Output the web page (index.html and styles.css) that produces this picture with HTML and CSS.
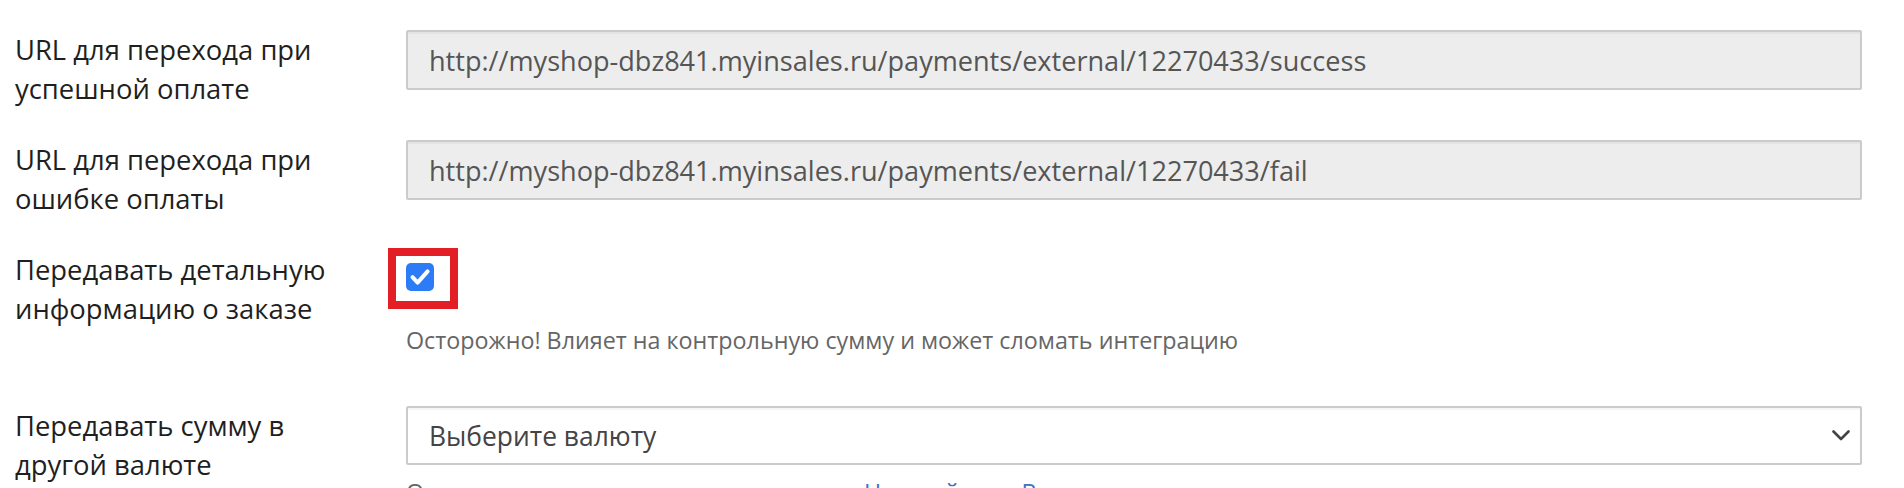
FILE: index.html
```html
<!DOCTYPE html>
<html lang="ru">
<head>
<meta charset="utf-8">
<title>Настройки оплаты</title>
<link rel="stylesheet" href="styles.css">
</head>
<body>
<div class="form">
  <div class="row">
    <div class="label">URL для перехода при успешной оплате</div>
    <div class="field">
      <input class="input" type="text" readonly value="http://myshop-dbz841.myinsales.ru/payments/external/12270433/success">
    </div>
  </div>
  <div class="row">
    <div class="label">URL для перехода при ошибке оплаты</div>
    <div class="field">
      <input class="input" type="text" readonly value="http://myshop-dbz841.myinsales.ru/payments/external/12270433/fail">
    </div>
  </div>
  <div class="row">
    <div class="label">Передавать детальную информацию о заказе</div>
    <div class="field field-check">
      <div class="checkbox">
        <svg class="check" width="28" height="28" viewBox="0 0 28 28"><path d="M6.5 14.2 L11.6 19.6 L21.6 8.4" fill="none" stroke="#fff" stroke-width="4" stroke-linecap="round" stroke-linejoin="round"/></svg>
        <span class="annot"></span>
      </div>
      <div class="help">Осторожно! Влияет на контрольную сумму и может сломать интеграцию</div>
    </div>
  </div>
  <div class="row">
    <div class="label">Передавать сумму в другой валюте</div>
    <div class="field">
      <div class="select">
        <span class="select-text">Выберите валюту</span>
        <svg class="chevron" width="18" height="11" viewBox="0 0 18 11"><path d="M1.5 1.5 L9 9 L16.5 1.5" fill="none" stroke="#444" stroke-width="2.6" stroke-linecap="round" stroke-linejoin="round"/></svg>
      </div>
      <div class="help help-bottom">Основная валюта задается на странице <a class="link" href="#">Настройки → Валюты</a></div>
    </div>
  </div>
</div>
</body>
</html>
```
FILE: styles.css
```css
html, body {
  margin: 0;
  background: #ffffff;
}

body {
  font-family: "Open Sans", "Noto Sans", sans-serif;
  color: #222222;
  overflow: hidden;
}

.form {
  display: flex;
  flex-direction: column;
  gap: 32px;
  padding: 30px 42px 0 15px;
}

.row {
  display: grid;
  grid-template-columns: 391px 1fr;
  align-items: start;
}

.label {
  font-size: 27.4px;
  line-height: 39px;
  color: #1f1f1f;
  max-width: 330px;
}

.field {
  min-width: 0;
}

.input {
  display: block;
  box-sizing: border-box;
  width: 100%;
  height: 60px;
  margin: 0;
  padding: 0 21px;
  border: 2px solid #cbcbcb;
  border-radius: 2px;
  background: #ededed;
  box-shadow: inset 0 2px 1px rgba(0, 0, 0, 0.04);
  font-family: "Open Sans", "Noto Sans", sans-serif;
  font-size: 27.1px;
  color: #555555;
  outline: none;
}

.field-check {
  padding-top: 13px;
  padding-bottom: 19px;
}

.checkbox {
  position: relative;
  width: 28px;
  height: 28px;
  border-radius: 5px;
  background: #2b7cf6;
}

.check {
  display: block;
}

.annot {
  position: absolute;
  left: -18px;
  top: -15px;
  width: 70px;
  height: 61px;
  box-sizing: border-box;
  border: 8px solid #e41e25;
}

.help {
  margin-top: 34px;
  font-size: 23.3px;
  line-height: 30px;
  color: #666666;
  white-space: nowrap;
}

.select {
  box-sizing: border-box;
  height: 59px;
  display: flex;
  align-items: center;
  justify-content: space-between;
  padding: 0 10px 0 21px;
  border: 2px solid #cbcbcb;
  border-radius: 2px;
  background: #ffffff;
  box-shadow: inset 0 2px 1px rgba(0, 0, 0, 0.04);
}

.select-text {
  font-size: 26.4px;
  color: #444444;
}

.chevron {
  display: block;
}

.help-bottom {
  margin-top: 12px;
}

.link {
  color: #3a74c2;
  text-decoration: none;
}
```
